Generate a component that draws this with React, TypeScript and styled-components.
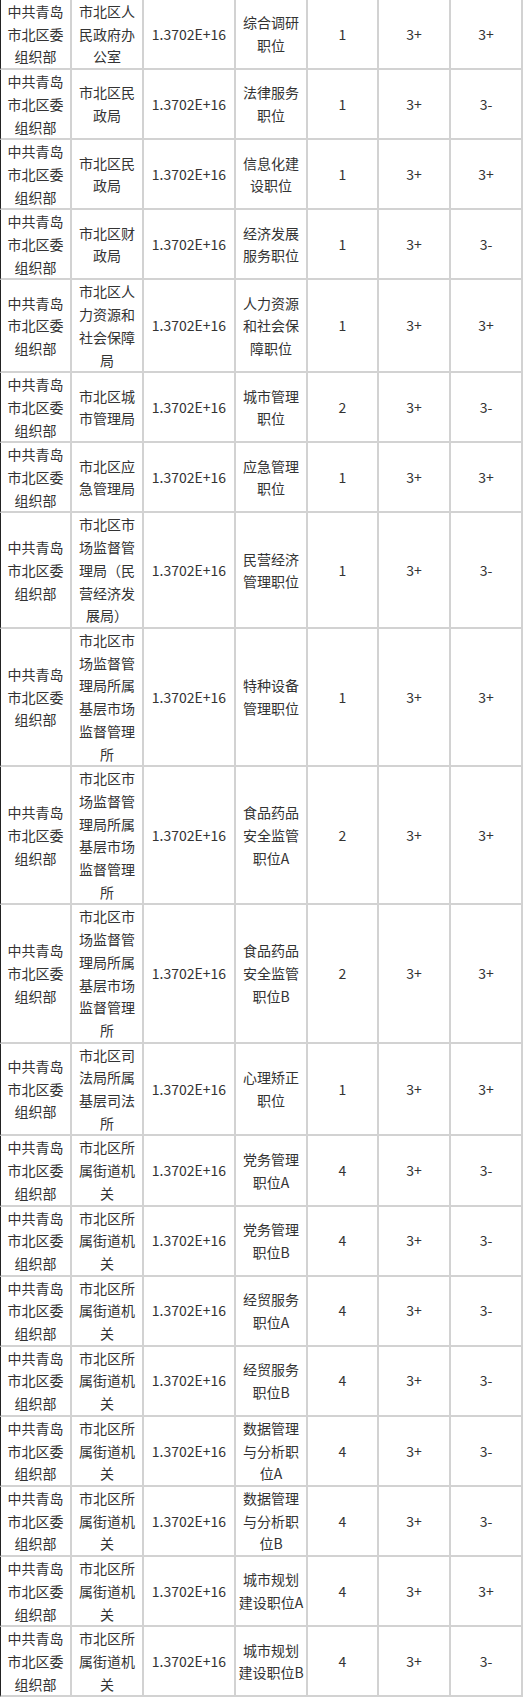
import React from "react"
import styled, { createGlobalStyle } from "styled-components"

type Post = {
	dept: string
	post: string
	count: number
	a: string
	b: string
}

const ORG = "中共青岛市北区委组织部"
const CODE = "1.3702E+16"
const MARKET = "市北区市场监督管理局所属基层市场监督管理所"
const STREET = "市北区所属街道机关"

const rows: Post[] = [
	{ dept: "市北区人民政府办公室", post: "综合调研职位", count: 1, a: "3+", b: "3+" },
	{ dept: "市北区民政局", post: "法律服务职位", count: 1, a: "3+", b: "3-" },
	{ dept: "市北区民政局", post: "信息化建设职位", count: 1, a: "3+", b: "3+" },
	{ dept: "市北区财政局", post: "经济发展服务职位", count: 1, a: "3+", b: "3-" },
	{ dept: "市北区人力资源和社会保障局", post: "人力资源和社会保障职位", count: 1, a: "3+", b: "3+" },
	{ dept: "市北区城市管理局", post: "城市管理职位", count: 2, a: "3+", b: "3-" },
	{ dept: "市北区应急管理局", post: "应急管理职位", count: 1, a: "3+", b: "3+" },
	{ dept: "市北区市场监督管理局（民营经济发展局）", post: "民营经济管理职位", count: 1, a: "3+", b: "3-" },
	{ dept: MARKET, post: "特种设备管理职位", count: 1, a: "3+", b: "3+" },
	{ dept: MARKET, post: "食品药品安全监管职位A", count: 2, a: "3+", b: "3+" },
	{ dept: MARKET, post: "食品药品安全监管职位B", count: 2, a: "3+", b: "3+" },
	{ dept: "市北区司法局所属基层司法所", post: "心理矫正职位", count: 1, a: "3+", b: "3+" },
	{ dept: STREET, post: "党务管理职位A", count: 4, a: "3+", b: "3-" },
	{ dept: STREET, post: "党务管理职位B", count: 4, a: "3+", b: "3-" },
	{ dept: STREET, post: "经贸服务职位A", count: 4, a: "3+", b: "3-" },
	{ dept: STREET, post: "经贸服务职位B", count: 4, a: "3+", b: "3-" },
	{ dept: STREET, post: "数据管理与分析职位A", count: 4, a: "3+", b: "3-" },
	{ dept: STREET, post: "数据管理与分析职位B", count: 4, a: "3+", b: "3-" },
	{ dept: STREET, post: "城市规划建设职位A", count: 4, a: "3+", b: "3+" },
	{ dept: STREET, post: "城市规划建设职位B", count: 4, a: "3+", b: "3-" },
]

const widths = [72, 72, 92, 72, 71, 72, 72]

const GlobalStyle = createGlobalStyle`
	body {
		margin: 0;
		background: #ffffff;
	}
`

const Table = styled.table`
	table-layout: fixed;
	width: 523px;
	border-collapse: separate;
	border-spacing: 0;
	font-family: "Noto Sans CJK SC", "Microsoft YaHei", sans-serif;
	font-size: 14px;
	line-height: 22.7px;
	color: #333333;
`

const Row = styled.tr``

const Cell = styled.td<{ $first?: boolean }>`
	padding: 0 2px;
	text-align: center;
	vertical-align: middle;
	word-break: break-all;
	border-right: 2px solid #d2d2d2;
	border-bottom: 2px solid #d2d2d2;
	border-left: ${(p) => (p.$first ? "1px solid #222222" : "none")};
`

export default function App() {
	return (
		<>
			<GlobalStyle />
			<Table>
				<colgroup>
					{widths.map((w, i) => (
						<col key={i} style={{ width: w }} />
					))}
				</colgroup>
				<tbody>
					{rows.map((r, i) => (
						<Row key={i}>
							<Cell $first>{ORG}</Cell>
							<Cell>{r.dept}</Cell>
							<Cell>{CODE}</Cell>
							<Cell>{r.post}</Cell>
							<Cell>{r.count}</Cell>
							<Cell>{r.a}</Cell>
							<Cell>{r.b}</Cell>
						</Row>
					))}
				</tbody>
			</Table>
		</>
	)
}
